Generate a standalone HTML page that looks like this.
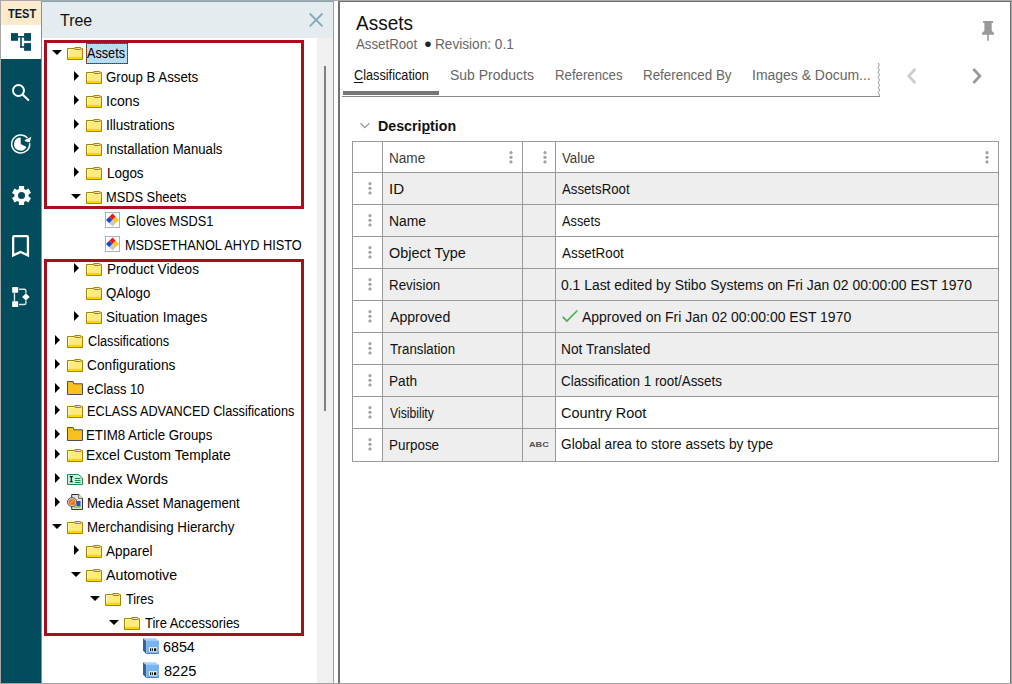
<!DOCTYPE html>
<html><head><meta charset="utf-8"><title>Assets</title>
<style>
html,body{margin:0;padding:0;background:#fff}
#app{position:relative;width:1012px;height:684px;overflow:hidden;background:#fff;font-family:"Liberation Sans", sans-serif}
#app div,#app span,#app svg{position:absolute}
.tx{white-space:nowrap;line-height:normal;transform-origin:0 50%;display:block}
.tx u{text-decoration-thickness:1px;text-underline-offset:2px}
.ic{display:block}
.cell{background:#eee}
.hl{height:1px;background:#999}
.vl{width:1px;background:#999}
.dt{fill:#a2a2a2}
.red{border:3px solid #a5101e;box-sizing:border-box}
</style></head><body>
<div id="app">
<!-- sidebar -->
<div style="left:1px;top:1px;width:40px;height:683px;background:#004c5c"></div>
<div style="left:1px;top:1px;width:40px;height:24px;background:#fde9cb"></div>
<div style="left:1px;top:25px;width:40px;height:34px;background:#fff"></div>
<svg class="ic" style="left:1px;top:25px" width="40" height="35" viewBox="1 25 40 35"><g fill="#004c5c"><rect x="11" y="33.100" width="7" height="7.700"/><rect x="24.100" y="33.100" width="6.900" height="7.700"/><rect x="24.100" y="43.100" width="6.900" height="7.700"/><rect x="17.500" y="36" width="7" height="1.600"/><rect x="20.200" y="36" width="1.600" height="11.800"/><rect x="20.200" y="46.200" width="4.500" height="1.600"/></g></svg>
<svg class="ic" style="left:1px;top:75px" width="40" height="35" viewBox="1 75 40 35"><circle cx="18.500" cy="90.500" r="5.500" fill="none" stroke="#fff" stroke-width="2"/><path d="M23.100 95.100L28.300 100" stroke="#fff" stroke-width="2.100" stroke-linecap="round"/></svg>
<svg class="ic" style="left:1px;top:126px" width="40" height="35" viewBox="1 126 40 35"><path d="M27.400 138A9 9 0 1 0 29.670 143.200" fill="none" stroke="#fff" stroke-width="1.500"/><path d="M31.300 136.700L24.600 140.200L25.200 141.200L29.800 142.400z" fill="#fff"/><path d="M20.700 144V137.400A6.600 6.600 0 1 0 26.500 147.100z" fill="#fff"/></svg>
<svg class="ic" style="left:1px;top:177px" width="40" height="35" viewBox="1 177 40 35"><g fill="#fff" transform="translate(21.500 195.500)"><circle r="7.100"/><rect x="-2.600" y="-9.500" width="5.200" height="19"/><rect x="-2.600" y="-9.500" width="5.200" height="19" transform="rotate(60)"/><rect x="-2.600" y="-9.500" width="5.200" height="19" transform="rotate(120)"/><circle r="3.500" fill="#004c5c"/></g></svg>
<svg class="ic" style="left:1px;top:228px" width="40" height="35" viewBox="1 228 40 35"><path d="M13.150 255.400V237.200Q13.150 236.050 14.300 236.050H26.800Q27.950 236.050 27.950 237.200V255.400L20.550 251.900Z" fill="none" stroke="#fff" stroke-width="2.300" stroke-linejoin="miter" stroke-miterlimit="10"/></svg>
<svg class="ic" style="left:1px;top:279px" width="40" height="35" viewBox="1 279 40 35"><g fill="#fff"><rect x="12.150" y="287.100" width="6" height="5.700" rx=".4"/><rect x="12.150" y="301.300" width="6" height="5.700" rx=".4"/><path d="M25.900 293.200l3.800 3.700l-3.800 3.700l-3.800-3.700z"/></g><g fill="none" stroke="#fff" stroke-opacity=".85" stroke-width="1.400"><path d="M14.450 292.800V301.300"/><path d="M18.900 289.200H24.400Q25.900 289.200 25.900 290.700V293.200"/><path d="M18.900 304.500H24.400Q25.900 304.500 25.900 303V300.600"/></g></svg>

<!-- tree panel -->
<div style="left:41px;top:1px;width:293px;height:37px;background:#e4ecef"></div>
<div style="left:41px;top:1px;width:1px;height:683px;background:#6f97a5"></div>
<svg class="ic" style="left:308px;top:12px" width="16" height="16" viewBox="308 12 16 16"><path d="M309.700 13.500L322.500 26.300M322.500 13.500L309.700 26.300" stroke="#86aab5" stroke-width="1.800" fill="none"/></svg>
<div style="left:317px;top:38px;width:16px;height:646px;background:#f0f0f0"></div>
<div style="left:324px;top:66px;width:2px;height:345px;background:#808080"></div>
<div style="left:86px;top:43px;width:42px;height:21px;background:#b9dcf0"></div><div style="left:86px;top:43px;width:42px;height:1px;background:repeating-linear-gradient(90deg,#15505f 0 1px,#9c5a30 1px 2px)"></div><div style="left:86px;top:63px;width:42px;height:1px;background:repeating-linear-gradient(90deg,#15505f 0 1px,#9c5a30 1px 2px)"></div><div style="left:86px;top:43px;width:1px;height:21px;background:repeating-linear-gradient(180deg,#15505f 0 1px,#9c5a30 1px 2px)"></div><div style="left:127px;top:43px;width:1px;height:21px;background:repeating-linear-gradient(180deg,#15505f 0 1px,#9c5a30 1px 2px)"></div>
<svg class="ic" style="left:52px;top:50px" width="10" height="5" viewBox="0 0 10 5"><path d="M0 0h10l-5 5z" fill="#000"/></svg><svg class="ic" style="left:67px;top:47px" width="16" height="13" viewBox="0 0 16 13"><path d="M7.5 2v-1q0-.5 .5-.5h5.500q.5 0 .5 .5v1.500z" fill="#fffef4" stroke="#a68500"/><path d="M.5 1.500h7l.8 1h5.400l.8-1h1v11h-15z" fill="#ffea80" stroke="#a68500"/><path d="M1 9.900h14v2.100h-14z" fill="#ffd500"/><path d="M1.500 9.500v-7h5.700" fill="none" stroke="#fff6b8"/></svg><svg class="ic" style="left:74px;top:71px" width="5" height="10" viewBox="0 0 5 10"><path d="M0 0v10l5-5z" fill="#000"/></svg><svg class="ic" style="left:86px;top:71px" width="16" height="13" viewBox="0 0 16 13"><path d="M7.5 2v-1q0-.5 .5-.5h5.500q.5 0 .5 .5v1.500z" fill="#fffef4" stroke="#a68500"/><path d="M.5 1.500h7l.8 1h5.400l.8-1h1v11h-15z" fill="#ffea80" stroke="#a68500"/><path d="M1 9.900h14v2.100h-14z" fill="#ffd500"/><path d="M1.500 9.500v-7h5.700" fill="none" stroke="#fff6b8"/></svg><svg class="ic" style="left:74px;top:95px" width="5" height="10" viewBox="0 0 5 10"><path d="M0 0v10l5-5z" fill="#000"/></svg><svg class="ic" style="left:86px;top:95px" width="16" height="13" viewBox="0 0 16 13"><path d="M7.5 2v-1q0-.5 .5-.5h5.500q.5 0 .5 .5v1.500z" fill="#fffef4" stroke="#a68500"/><path d="M.5 1.500h7l.8 1h5.400l.8-1h1v11h-15z" fill="#ffea80" stroke="#a68500"/><path d="M1 9.900h14v2.100h-14z" fill="#ffd500"/><path d="M1.500 9.500v-7h5.700" fill="none" stroke="#fff6b8"/></svg><svg class="ic" style="left:74px;top:119px" width="5" height="10" viewBox="0 0 5 10"><path d="M0 0v10l5-5z" fill="#000"/></svg><svg class="ic" style="left:86px;top:119px" width="16" height="13" viewBox="0 0 16 13"><path d="M7.5 2v-1q0-.5 .5-.5h5.500q.5 0 .5 .5v1.500z" fill="#fffef4" stroke="#a68500"/><path d="M.5 1.500h7l.8 1h5.400l.8-1h1v11h-15z" fill="#ffea80" stroke="#a68500"/><path d="M1 9.900h14v2.100h-14z" fill="#ffd500"/><path d="M1.500 9.500v-7h5.700" fill="none" stroke="#fff6b8"/></svg><svg class="ic" style="left:74px;top:143px" width="5" height="10" viewBox="0 0 5 10"><path d="M0 0v10l5-5z" fill="#000"/></svg><svg class="ic" style="left:86px;top:143px" width="16" height="13" viewBox="0 0 16 13"><path d="M7.5 2v-1q0-.5 .5-.5h5.500q.5 0 .5 .5v1.500z" fill="#fffef4" stroke="#a68500"/><path d="M.5 1.500h7l.8 1h5.400l.8-1h1v11h-15z" fill="#ffea80" stroke="#a68500"/><path d="M1 9.900h14v2.100h-14z" fill="#ffd500"/><path d="M1.500 9.500v-7h5.700" fill="none" stroke="#fff6b8"/></svg><svg class="ic" style="left:74px;top:167px" width="5" height="10" viewBox="0 0 5 10"><path d="M0 0v10l5-5z" fill="#000"/></svg><svg class="ic" style="left:86px;top:167px" width="16" height="13" viewBox="0 0 16 13"><path d="M7.5 2v-1q0-.5 .5-.5h5.500q.5 0 .5 .5v1.500z" fill="#fffef4" stroke="#a68500"/><path d="M.5 1.500h7l.8 1h5.400l.8-1h1v11h-15z" fill="#ffea80" stroke="#a68500"/><path d="M1 9.900h14v2.100h-14z" fill="#ffd500"/><path d="M1.500 9.500v-7h5.700" fill="none" stroke="#fff6b8"/></svg><svg class="ic" style="left:71px;top:194px" width="10" height="5" viewBox="0 0 10 5"><path d="M0 0h10l-5 5z" fill="#000"/></svg><svg class="ic" style="left:86px;top:191px" width="16" height="13" viewBox="0 0 16 13"><path d="M7.5 2v-1q0-.5 .5-.5h5.500q.5 0 .5 .5v1.500z" fill="#fffef4" stroke="#a68500"/><path d="M.5 1.500h7l.8 1h5.400l.8-1h1v11h-15z" fill="#ffea80" stroke="#a68500"/><path d="M1 9.900h14v2.100h-14z" fill="#ffd500"/><path d="M1.500 9.500v-7h5.700" fill="none" stroke="#fff6b8"/></svg><svg class="ic" style="left:105px;top:212px" width="15" height="16" viewBox="0 0 15 16"><rect x=".5" y=".5" width="14" height="15" fill="#fff" stroke="#b0b0b0"/><path d="M7.5 1.5l3.250 3.250l-3.250 3.250l-3.250-3.250z" fill="#f01818"/><path d="M4.250 4.750l3.250 3.250l-3.250 3.250l-3.250-3.250z" fill="#1848c8"/><path d="M10.750 4.750l3.250 3.250l-3.250 3.250l-3.250-3.250z" fill="#ffc818"/><path d="M7.5 8l3.250 3.250l-3.250 3.250l-3.250-3.250z" fill="#c8c8c8"/></svg><svg class="ic" style="left:105px;top:236px" width="15" height="16" viewBox="0 0 15 16"><rect x=".5" y=".5" width="14" height="15" fill="#fff" stroke="#b0b0b0"/><path d="M7.5 1.5l3.250 3.250l-3.250 3.250l-3.250-3.250z" fill="#f01818"/><path d="M4.250 4.750l3.250 3.250l-3.250 3.250l-3.250-3.250z" fill="#1848c8"/><path d="M10.750 4.750l3.250 3.250l-3.250 3.250l-3.250-3.250z" fill="#ffc818"/><path d="M7.5 8l3.250 3.250l-3.250 3.250l-3.250-3.250z" fill="#c8c8c8"/></svg><svg class="ic" style="left:74px;top:263px" width="5" height="10" viewBox="0 0 5 10"><path d="M0 0v10l5-5z" fill="#000"/></svg><svg class="ic" style="left:86px;top:263px" width="16" height="13" viewBox="0 0 16 13"><path d="M7.5 2v-1q0-.5 .5-.5h5.500q.5 0 .5 .5v1.500z" fill="#fffef4" stroke="#a68500"/><path d="M.5 1.500h7l.8 1h5.400l.8-1h1v11h-15z" fill="#ffea80" stroke="#a68500"/><path d="M1 9.900h14v2.100h-14z" fill="#ffd500"/><path d="M1.500 9.500v-7h5.700" fill="none" stroke="#fff6b8"/></svg><svg class="ic" style="left:86px;top:287px" width="16" height="13" viewBox="0 0 16 13"><path d="M7.5 2v-1q0-.5 .5-.5h5.500q.5 0 .5 .5v1.500z" fill="#fffef4" stroke="#a68500"/><path d="M.5 1.500h7l.8 1h5.400l.8-1h1v11h-15z" fill="#ffea80" stroke="#a68500"/><path d="M1 9.900h14v2.100h-14z" fill="#ffd500"/><path d="M1.500 9.500v-7h5.700" fill="none" stroke="#fff6b8"/></svg><svg class="ic" style="left:74px;top:311px" width="5" height="10" viewBox="0 0 5 10"><path d="M0 0v10l5-5z" fill="#000"/></svg><svg class="ic" style="left:86px;top:311px" width="16" height="13" viewBox="0 0 16 13"><path d="M7.5 2v-1q0-.5 .5-.5h5.500q.5 0 .5 .5v1.500z" fill="#fffef4" stroke="#a68500"/><path d="M.5 1.500h7l.8 1h5.400l.8-1h1v11h-15z" fill="#ffea80" stroke="#a68500"/><path d="M1 9.900h14v2.100h-14z" fill="#ffd500"/><path d="M1.500 9.500v-7h5.700" fill="none" stroke="#fff6b8"/></svg><svg class="ic" style="left:55px;top:335px" width="5" height="10" viewBox="0 0 5 10"><path d="M0 0v10l5-5z" fill="#000"/></svg><svg class="ic" style="left:67px;top:335px" width="16" height="13" viewBox="0 0 16 13"><path d="M7.5 2v-1q0-.5 .5-.5h5.500q.5 0 .5 .5v1.500z" fill="#fffef4" stroke="#a68500"/><path d="M.5 1.500h7l.8 1h5.400l.8-1h1v11h-15z" fill="#ffea80" stroke="#a68500"/><path d="M1 9.900h14v2.100h-14z" fill="#ffd500"/><path d="M1.500 9.500v-7h5.700" fill="none" stroke="#fff6b8"/></svg><svg class="ic" style="left:55px;top:359px" width="5" height="10" viewBox="0 0 5 10"><path d="M0 0v10l5-5z" fill="#000"/></svg><svg class="ic" style="left:67px;top:359px" width="16" height="13" viewBox="0 0 16 13"><path d="M7.5 2v-1q0-.5 .5-.5h5.500q.5 0 .5 .5v1.500z" fill="#fffef4" stroke="#a68500"/><path d="M.5 1.500h7l.8 1h5.400l.8-1h1v11h-15z" fill="#ffea80" stroke="#a68500"/><path d="M1 9.900h14v2.100h-14z" fill="#ffd500"/><path d="M1.500 9.500v-7h5.700" fill="none" stroke="#fff6b8"/></svg><svg class="ic" style="left:55px;top:383px" width="5" height="10" viewBox="0 0 5 10"><path d="M0 0v10l5-5z" fill="#000"/></svg><svg class="ic" style="left:67px;top:381px" width="16" height="14" viewBox="0 0 16 14"><path d="M.5 .5h5.600l.7 2.300h8.700v10.700h-15z" fill="#fbc01e" stroke="#44505a"/></svg><svg class="ic" style="left:55px;top:405px" width="5" height="10" viewBox="0 0 5 10"><path d="M0 0v10l5-5z" fill="#000"/></svg><svg class="ic" style="left:67px;top:405px" width="16" height="13" viewBox="0 0 16 13"><path d="M7.5 2v-1q0-.5 .5-.5h5.500q.5 0 .5 .5v1.500z" fill="#fffef4" stroke="#a68500"/><path d="M.5 1.500h7l.8 1h5.400l.8-1h1v11h-15z" fill="#ffea80" stroke="#a68500"/><path d="M1 9.900h14v2.100h-14z" fill="#ffd500"/><path d="M1.500 9.500v-7h5.700" fill="none" stroke="#fff6b8"/></svg><svg class="ic" style="left:55px;top:429px" width="5" height="10" viewBox="0 0 5 10"><path d="M0 0v10l5-5z" fill="#000"/></svg><svg class="ic" style="left:67px;top:427px" width="16" height="14" viewBox="0 0 16 14"><path d="M.5 .5h5.600l.7 2.300h8.700v10.700h-15z" fill="#fbc01e" stroke="#44505a"/></svg><svg class="ic" style="left:55px;top:449px" width="5" height="10" viewBox="0 0 5 10"><path d="M0 0v10l5-5z" fill="#000"/></svg><svg class="ic" style="left:67px;top:449px" width="16" height="13" viewBox="0 0 16 13"><path d="M7.5 2v-1q0-.5 .5-.5h5.500q.5 0 .5 .5v1.500z" fill="#fffef4" stroke="#a68500"/><path d="M.5 1.500h7l.8 1h5.400l.8-1h1v11h-15z" fill="#ffea80" stroke="#a68500"/><path d="M1 9.900h14v2.100h-14z" fill="#ffd500"/><path d="M1.500 9.500v-7h5.700" fill="none" stroke="#fff6b8"/></svg><svg class="ic" style="left:55px;top:473px" width="5" height="10" viewBox="0 0 5 10"><path d="M0 0v10l5-5z" fill="#000"/></svg><svg class="ic" style="left:67px;top:474px" width="16" height="11" viewBox="0 0 16 11"><path d="M.5 .5h11l4 3.500v6.500h-15z" fill="#d0ecd8" stroke="#1a8a50"/><path d="M2.800 2.600h3M2.800 7.800h3M4.300 2.600v5.200" stroke="#111" stroke-width="1.100"/><path d="M8 4.500h5.500M8 6.500h5.500M8 8.500h5.500" stroke="#1a8a50"/></svg><svg class="ic" style="left:55px;top:497px" width="5" height="10" viewBox="0 0 5 10"><path d="M0 0v10l5-5z" fill="#000"/></svg><svg class="ic" style="left:67px;top:494px" width="16" height="16" viewBox="0 0 16 16"><path d="M4.700 .5h7l3.800 3.800v11.200h-10.800z" fill="#e2e2e2" stroke="#333"/><path d="M11.700 .5v3.800h3.800" fill="#fff" stroke="#333" stroke-width=".8"/><rect x="9.500" y="7" width="4" height="5.500" fill="#1e50d8"/><rect x="7" y="12.400" width="6.500" height="1.500" fill="#80d820"/><circle cx="5.100" cy="8.100" r="4.600" fill="#d0d0d0" stroke="#555"/><circle cx="5.100" cy="8.100" r="3.200" fill="#f07018"/><path d="M3.500 9.600q1-3 3.200-3" stroke="#f8b070" fill="none"/></svg><svg class="ic" style="left:52px;top:524px" width="10" height="5" viewBox="0 0 10 5"><path d="M0 0h10l-5 5z" fill="#000"/></svg><svg class="ic" style="left:67px;top:521px" width="16" height="13" viewBox="0 0 16 13"><path d="M7.5 2v-1q0-.5 .5-.5h5.500q.5 0 .5 .5v1.500z" fill="#fffef4" stroke="#a68500"/><path d="M.5 1.500h7l.8 1h5.400l.8-1h1v11h-15z" fill="#ffea80" stroke="#a68500"/><path d="M1 9.900h14v2.100h-14z" fill="#ffd500"/><path d="M1.500 9.500v-7h5.700" fill="none" stroke="#fff6b8"/></svg><svg class="ic" style="left:74px;top:545px" width="5" height="10" viewBox="0 0 5 10"><path d="M0 0v10l5-5z" fill="#000"/></svg><svg class="ic" style="left:86px;top:545px" width="16" height="13" viewBox="0 0 16 13"><path d="M7.5 2v-1q0-.5 .5-.5h5.500q.5 0 .5 .5v1.500z" fill="#fffef4" stroke="#a68500"/><path d="M.5 1.500h7l.8 1h5.400l.8-1h1v11h-15z" fill="#ffea80" stroke="#a68500"/><path d="M1 9.900h14v2.100h-14z" fill="#ffd500"/><path d="M1.500 9.500v-7h5.700" fill="none" stroke="#fff6b8"/></svg><svg class="ic" style="left:71px;top:572px" width="10" height="5" viewBox="0 0 10 5"><path d="M0 0h10l-5 5z" fill="#000"/></svg><svg class="ic" style="left:86px;top:569px" width="16" height="13" viewBox="0 0 16 13"><path d="M7.5 2v-1q0-.5 .5-.5h5.500q.5 0 .5 .5v1.500z" fill="#fffef4" stroke="#a68500"/><path d="M.5 1.500h7l.8 1h5.400l.8-1h1v11h-15z" fill="#ffea80" stroke="#a68500"/><path d="M1 9.900h14v2.100h-14z" fill="#ffd500"/><path d="M1.500 9.500v-7h5.700" fill="none" stroke="#fff6b8"/></svg><svg class="ic" style="left:90px;top:596px" width="10" height="5" viewBox="0 0 10 5"><path d="M0 0h10l-5 5z" fill="#000"/></svg><svg class="ic" style="left:105px;top:593px" width="16" height="13" viewBox="0 0 16 13"><path d="M7.5 2v-1q0-.5 .5-.5h5.500q.5 0 .5 .5v1.500z" fill="#fffef4" stroke="#a68500"/><path d="M.5 1.500h7l.8 1h5.400l.8-1h1v11h-15z" fill="#ffea80" stroke="#a68500"/><path d="M1 9.900h14v2.100h-14z" fill="#ffd500"/><path d="M1.500 9.500v-7h5.700" fill="none" stroke="#fff6b8"/></svg><svg class="ic" style="left:109px;top:620px" width="10" height="5" viewBox="0 0 10 5"><path d="M0 0h10l-5 5z" fill="#000"/></svg><svg class="ic" style="left:124px;top:617px" width="16" height="13" viewBox="0 0 16 13"><path d="M7.5 2v-1q0-.5 .5-.5h5.500q.5 0 .5 .5v1.500z" fill="#fffef4" stroke="#a68500"/><path d="M.5 1.500h7l.8 1h5.400l.8-1h1v11h-15z" fill="#ffea80" stroke="#a68500"/><path d="M1 9.900h14v2.100h-14z" fill="#ffd500"/><path d="M1.500 9.500v-7h5.700" fill="none" stroke="#fff6b8"/></svg><svg class="ic" style="left:143px;top:638px" width="16" height="16" viewBox="0 0 16 16"><path d="M0 .3H12.600L16 2.900H3.200z" fill="#a8d0f8"/><path d="M0 .3L3.200 2.900V15.900L0 12.600z" fill="#3a6290"/><rect x="3.200" y="2.900" width="12.800" height="12" fill="#78b4f4"/><rect x="3.200" y="14.900" width="12.800" height="1" fill="#4a78a8"/><rect x="6" y="9.300" width="8" height="4.200" fill="#fff"/><path d="M7 10.200h1.100v2.700h-1.100zM8.800 10.200h1.100v2.700h-1.100zM10.900 10.200h2.400v2.700h-2.400z" fill="#111"/></svg><svg class="ic" style="left:143px;top:662px" width="16" height="16" viewBox="0 0 16 16"><path d="M0 .3H12.600L16 2.900H3.200z" fill="#a8d0f8"/><path d="M0 .3L3.200 2.900V15.900L0 12.600z" fill="#3a6290"/><rect x="3.200" y="2.900" width="12.800" height="12" fill="#78b4f4"/><rect x="3.200" y="14.900" width="12.800" height="1" fill="#4a78a8"/><rect x="6" y="9.300" width="8" height="4.200" fill="#fff"/><path d="M7 10.200h1.100v2.700h-1.100zM8.800 10.200h1.100v2.700h-1.100zM10.900 10.200h2.400v2.700h-2.400z" fill="#111"/></svg>
<div class="red" style="left:44px;top:40px;width:260px;height:169px"></div>
<div class="red" style="left:44px;top:259px;width:260px;height:377px"></div>
<!-- splitter -->
<div style="left:333px;top:1px;width:1px;height:683px;background:#7fa8b8"></div>
<div style="left:338px;top:1px;width:2px;height:683px;background:#707070"></div>
<!-- right panel -->
<div class="hl" style="left:342px;top:95.700px;width:538px;height:1.200px;background:#888"></div>
<div style="left:343px;top:91px;width:96px;height:3.700px;background:#777"></div>
<div class="hl" style="left:352px;top:141px;width:647px"></div>
<div class="hl" style="left:352px;top:172px;width:647px"></div>
<div class="cell" style="left:383px;top:173px;width:139px;height:31px"></div><div class="cell" style="left:523px;top:173px;width:32px;height:31px"></div><div class="cell" style="left:556px;top:173px;width:442px;height:31px;background:#eee"></div><div class="hl" style="left:352px;top:204px;width:647px"></div><svg class="ic dt" style="left:367.7px;top:181.8px" width="4" height="13" viewBox="0 0 4 13"><circle cx="2" cy="1.700" r="1.600"/><circle cx="2" cy="6.300" r="1.600"/><circle cx="2" cy="10.900" r="1.600"/></svg><div class="cell" style="left:383px;top:205px;width:139px;height:31px"></div><div class="cell" style="left:523px;top:205px;width:32px;height:31px"></div><div class="cell" style="left:556px;top:205px;width:442px;height:31px;background:#fff"></div><div class="hl" style="left:352px;top:236px;width:647px"></div><svg class="ic dt" style="left:367.7px;top:213.8px" width="4" height="13" viewBox="0 0 4 13"><circle cx="2" cy="1.700" r="1.600"/><circle cx="2" cy="6.300" r="1.600"/><circle cx="2" cy="10.900" r="1.600"/></svg><div class="cell" style="left:383px;top:237px;width:139px;height:31px"></div><div class="cell" style="left:523px;top:237px;width:32px;height:31px"></div><div class="cell" style="left:556px;top:237px;width:442px;height:31px;background:#fff"></div><div class="hl" style="left:352px;top:268px;width:647px"></div><svg class="ic dt" style="left:367.7px;top:245.8px" width="4" height="13" viewBox="0 0 4 13"><circle cx="2" cy="1.700" r="1.600"/><circle cx="2" cy="6.300" r="1.600"/><circle cx="2" cy="10.900" r="1.600"/></svg><div class="cell" style="left:383px;top:269px;width:139px;height:31px"></div><div class="cell" style="left:523px;top:269px;width:32px;height:31px"></div><div class="cell" style="left:556px;top:269px;width:442px;height:31px;background:#eee"></div><div class="hl" style="left:352px;top:300px;width:647px"></div><svg class="ic dt" style="left:367.7px;top:277.8px" width="4" height="13" viewBox="0 0 4 13"><circle cx="2" cy="1.700" r="1.600"/><circle cx="2" cy="6.300" r="1.600"/><circle cx="2" cy="10.900" r="1.600"/></svg><div class="cell" style="left:383px;top:301px;width:139px;height:31px"></div><div class="cell" style="left:523px;top:301px;width:32px;height:31px"></div><div class="cell" style="left:556px;top:301px;width:442px;height:31px;background:#eee"></div><div class="hl" style="left:352px;top:332px;width:647px"></div><svg class="ic dt" style="left:367.7px;top:309.8px" width="4" height="13" viewBox="0 0 4 13"><circle cx="2" cy="1.700" r="1.600"/><circle cx="2" cy="6.300" r="1.600"/><circle cx="2" cy="10.900" r="1.600"/></svg><div class="cell" style="left:383px;top:333px;width:139px;height:31px"></div><div class="cell" style="left:523px;top:333px;width:32px;height:31px"></div><div class="cell" style="left:556px;top:333px;width:442px;height:31px;background:#eee"></div><div class="hl" style="left:352px;top:364px;width:647px"></div><svg class="ic dt" style="left:367.7px;top:341.8px" width="4" height="13" viewBox="0 0 4 13"><circle cx="2" cy="1.700" r="1.600"/><circle cx="2" cy="6.300" r="1.600"/><circle cx="2" cy="10.900" r="1.600"/></svg><div class="cell" style="left:383px;top:365px;width:139px;height:31px"></div><div class="cell" style="left:523px;top:365px;width:32px;height:31px"></div><div class="cell" style="left:556px;top:365px;width:442px;height:31px;background:#eee"></div><div class="hl" style="left:352px;top:396px;width:647px"></div><svg class="ic dt" style="left:367.7px;top:373.8px" width="4" height="13" viewBox="0 0 4 13"><circle cx="2" cy="1.700" r="1.600"/><circle cx="2" cy="6.300" r="1.600"/><circle cx="2" cy="10.900" r="1.600"/></svg><div class="cell" style="left:383px;top:397px;width:139px;height:31px"></div><div class="cell" style="left:523px;top:397px;width:32px;height:31px"></div><div class="cell" style="left:556px;top:397px;width:442px;height:31px;background:#fff"></div><div class="hl" style="left:352px;top:428px;width:647px"></div><svg class="ic dt" style="left:367.7px;top:405.8px" width="4" height="13" viewBox="0 0 4 13"><circle cx="2" cy="1.700" r="1.600"/><circle cx="2" cy="6.300" r="1.600"/><circle cx="2" cy="10.900" r="1.600"/></svg><div class="cell" style="left:383px;top:429px;width:139px;height:32px"></div><div class="cell" style="left:523px;top:429px;width:32px;height:32px"></div><div class="cell" style="left:556px;top:429px;width:442px;height:32px;background:#fff"></div><div class="hl" style="left:352px;top:461px;width:647px"></div><svg class="ic dt" style="left:367.7px;top:437.8px" width="4" height="13" viewBox="0 0 4 13"><circle cx="2" cy="1.700" r="1.600"/><circle cx="2" cy="6.300" r="1.600"/><circle cx="2" cy="10.900" r="1.600"/></svg>
<div class="vl" style="left:352px;top:141px;height:321px"></div>
<div class="vl" style="left:382px;top:141px;height:321px"></div>
<div class="vl" style="left:522px;top:141px;height:321px"></div>
<div class="vl" style="left:555px;top:141px;height:321px"></div>
<div class="vl" style="left:998px;top:141px;height:321px"></div>
<svg class="ic dt" style="left:509px;top:150.6px" width="4" height="13" viewBox="0 0 4 13"><circle cx="2" cy="1.700" r="1.600"/><circle cx="2" cy="6.300" r="1.600"/><circle cx="2" cy="10.900" r="1.600"/></svg><svg class="ic dt" style="left:543.3px;top:150.6px" width="4" height="13" viewBox="0 0 4 13"><circle cx="2" cy="1.700" r="1.600"/><circle cx="2" cy="6.300" r="1.600"/><circle cx="2" cy="10.900" r="1.600"/></svg><svg class="ic dt" style="left:984.8px;top:150.6px" width="4" height="13" viewBox="0 0 4 13"><circle cx="2" cy="1.700" r="1.600"/><circle cx="2" cy="6.300" r="1.600"/><circle cx="2" cy="10.900" r="1.600"/></svg>
<svg class="ic" style="left:980px;top:18px" width="16" height="26" viewBox="980 18 16 26"><path d="M983.100 21H993V22.900H991.700V30.700L994 33V34.850H988.800V40.700H987.200V34.850H982V33L984.400 30.700V22.900H983.100Z" fill="#999"/></svg>
<svg class="ic" style="left:904px;top:64px" width="16" height="24" viewBox="904 64 16 24"><path d="M915.300 69L908.800 76L915.300 83" fill="none" stroke="#cdcdcd" stroke-width="2.700"/></svg>
<svg class="ic" style="left:969px;top:64px" width="16" height="24" viewBox="969 64 16 24"><path d="M973.400 69L979.900 76L973.400 83" fill="none" stroke="#999" stroke-width="2.700"/></svg>
<svg class="ic" style="left:874px;top:62px" width="10" height="36" viewBox="874 62 10 36"><path d="M878.300 63L879.300 65L878 67.500L879.400 70L878.100 72.500L879.500 75L878.200 77.500L879.500 80L878.200 82.500L879.500 85L878.300 87.500L879.600 90L878.400 92.500L879.500 95L879 96.300" fill="none" stroke="#808080" stroke-width=".8"/></svg>
<svg class="ic" style="left:358px;top:120px" width="14" height="12" viewBox="358 120 14 12"><path d="M360.500 123.200L364.900 127.600L369.300 123.200" fill="none" stroke="#999" stroke-width="1.300"/></svg>
<svg class="ic" style="left:560px;top:306px" width="20" height="18" viewBox="560 306 20 18"><path d="M562.700 316.800L566.900 321L577.400 310.500" fill="none" stroke="#4caf50" stroke-width="1.700"/></svg>

<span class="tx" style="left:87.05px;top:45.33px;font-size:14px;color:#000;transform:scaleX(0.9041)">Assets</span><span class="tx" style="left:106.43px;top:69.33px;font-size:14px;color:#000;transform:scaleX(0.9471)">Group B Assets</span><span class="tx" style="left:106.12px;top:93.33px;font-size:14px;color:#000;transform:scaleX(1.0028)">Icons</span><span class="tx" style="left:106.17px;top:117.33px;font-size:14px;color:#000;transform:scaleX(0.9683)">Illustrations</span><span class="tx" style="left:106.20px;top:141.33px;font-size:14px;color:#000;transform:scaleX(0.9409)">Installation Manuals</span><span class="tx" style="left:106.82px;top:165.33px;font-size:14px;color:#000;transform:scaleX(0.9587)">Logos</span><span class="tx" style="left:106.04px;top:189.33px;font-size:14px;color:#000;transform:scaleX(0.9156)">MSDS Sheets</span><span class="tx" style="left:125.56px;top:213.33px;font-size:14px;color:#000;transform:scaleX(0.9133)">Gloves MSDS1</span><span class="tx" style="left:125.05px;top:237.33px;font-size:14px;color:#000;transform:scaleX(0.9088)">MSDSETHANOL AHYD HISTO</span><span class="tx" style="left:106.81px;top:261.33px;font-size:14px;color:#000;transform:scaleX(0.9709)">Product Videos</span><span class="tx" style="left:105.73px;top:285.33px;font-size:14px;color:#000;transform:scaleX(0.9493)">QAlogo</span><span class="tx" style="left:105.75px;top:309.33px;font-size:14px;color:#000;transform:scaleX(0.9707)">Situation Images</span><span class="tx" style="left:87.53px;top:333.33px;font-size:14px;color:#000;transform:scaleX(0.9065)">Classifications</span><span class="tx" style="left:87.31px;top:357.33px;font-size:14px;color:#000;transform:scaleX(0.9792)">Configurations</span><span class="tx" style="left:86.94px;top:381.33px;font-size:14px;color:#000;transform:scaleX(0.9200)">eClass 10</span><span class="tx" style="left:86.55px;top:403.33px;font-size:14px;color:#000;transform:scaleX(0.9075)">ECLASS ADVANCED Classifications</span><span class="tx" style="left:86.44px;top:427.33px;font-size:14px;color:#000;transform:scaleX(0.9496)">ETIM8 Article Groups</span><span class="tx" style="left:86.40px;top:447.33px;font-size:14px;color:#000;transform:scaleX(0.9849)">Excel Custom Template</span><span class="tx" style="left:86.54px;top:471.33px;font-size:14px;color:#000;transform:scaleX(1.0341)">Index Words</span><span class="tx" style="left:87.01px;top:495.33px;font-size:14px;color:#000;transform:scaleX(0.9437)">Media Asset Management</span><span class="tx" style="left:86.93px;top:519.33px;font-size:14px;color:#000;transform:scaleX(0.9515)">Merchandising Hierarchy</span><span class="tx" style="left:106.06px;top:543.33px;font-size:14px;color:#000;transform:scaleX(0.9615)">Apparel</span><span class="tx" style="left:106.06px;top:567.33px;font-size:14px;color:#000;transform:scaleX(1.0150)">Automotive</span><span class="tx" style="left:125.99px;top:591.33px;font-size:14px;color:#000;transform:scaleX(0.8998)">Tires</span><span class="tx" style="left:144.99px;top:615.33px;font-size:14px;color:#000;transform:scaleX(0.9255)">Tire Accessories</span><span class="tx" style="left:163.22px;top:639.33px;font-size:14px;color:#000;transform:scaleX(1.0216)">6854</span><span class="tx" style="left:163.52px;top:663.33px;font-size:14px;color:#000;transform:scaleX(1.0433)">8225</span><span class="tx" style="left:7.54px;top:6.74px;font-size:12px;color:#0c1c2c;transform:scaleX(0.9163);font-weight:700">TEST</span><span class="tx" style="left:60.49px;top:11.60px;font-size:15.8px;color:#111;transform:scaleX(1.0115)">Tree</span><span class="tx" style="left:356.04px;top:12.15px;font-size:19.5px;color:#111;transform:scaleX(0.9741)">Assets</span><span class="tx" style="left:356.04px;top:36.33px;font-size:14px;color:#666;transform:scaleX(0.9471)">AssetRoot</span><span class="tx" style="left:424.20px;top:32.00px;font-size:21px;color:#222;transform:scaleX(1.0000)">•</span><span class="tx" style="left:435.36px;top:36.33px;font-size:14px;color:#666;transform:scaleX(0.9735)">Revision: 0.1</span><span class="tx" style="left:354.00px;top:67.33px;font-size:14px;color:#111;transform:scaleX(0.9078)"><u>C</u>lassification</span><span class="tx" style="left:449.75px;top:67.33px;font-size:14px;color:#666;transform:scaleX(0.9987)">Sub Products</span><span class="tx" style="left:555.40px;top:67.33px;font-size:14px;color:#666;transform:scaleX(0.9430)">References</span><span class="tx" style="left:643.34px;top:67.33px;font-size:14px;color:#666;transform:scaleX(0.9556)">Referenced By</span><span class="tx" style="left:751.65px;top:67.33px;font-size:14px;color:#666;transform:scaleX(0.9971)">Images &amp; Docum...</span><span class="tx" style="left:378.26px;top:118.33px;font-size:14px;color:#111;transform:scaleX(1.0143);font-weight:700">Descri<u>p</u>tion</span><span class="tx" style="left:389.33px;top:150.33px;font-size:14px;color:#3c3c3c;transform:scaleX(0.9705)">Name</span><span class="tx" style="left:562.03px;top:150.33px;font-size:14px;color:#3c3c3c;transform:scaleX(0.9481)">Value</span><span class="tx" style="left:529.07px;top:440.36px;font-size:8px;color:#505050;transform:scaleX(1.1370);font-weight:700">ABC</span><span class="tx" style="left:388.50px;top:181.13px;font-size:14px;color:#111;transform:scaleX(1.0805)">ID</span><span class="tx" style="left:562.04px;top:181.13px;font-size:14px;color:#111;transform:scaleX(0.9438)">AssetsRoot</span><span class="tx" style="left:388.80px;top:213.13px;font-size:14px;color:#111;transform:scaleX(0.9920)">Name</span><span class="tx" style="left:562.04px;top:213.13px;font-size:14px;color:#111;transform:scaleX(0.9124)">Assets</span><span class="tx" style="left:388.92px;top:245.13px;font-size:14px;color:#111;transform:scaleX(1.0307)">Object Type</span><span class="tx" style="left:562.04px;top:245.13px;font-size:14px;color:#111;transform:scaleX(0.9571)">AssetRoot</span><span class="tx" style="left:388.85px;top:277.13px;font-size:14px;color:#111;transform:scaleX(0.9544)">Revision</span><span class="tx" style="left:561.04px;top:277.13px;font-size:14px;color:#111;transform:scaleX(0.9933)">0.1 Last edited by Stibo Systems on Fri Jan 02 00:00:00 EST 1970</span><span class="tx" style="left:389.53px;top:309.13px;font-size:14px;color:#111;transform:scaleX(1.0057)">Approved</span><span class="tx" style="left:582.04px;top:309.13px;font-size:14px;color:#111;transform:scaleX(0.9976)">Approved on Fri Jan 02 00:00:00 EST 1970</span><span class="tx" style="left:389.52px;top:341.13px;font-size:14px;color:#111;transform:scaleX(0.9475)">Translation</span><span class="tx" style="left:561.32px;top:341.13px;font-size:14px;color:#111;transform:scaleX(0.9811)">Not Translated</span><span class="tx" style="left:388.83px;top:373.13px;font-size:14px;color:#111;transform:scaleX(0.9740)">Path</span><span class="tx" style="left:561.40px;top:373.13px;font-size:14px;color:#111;transform:scaleX(0.9577)">Classification 1 root/Assets</span><span class="tx" style="left:389.53px;top:405.13px;font-size:14px;color:#111;transform:scaleX(0.8717)">Visibility</span><span class="tx" style="left:561.18px;top:405.13px;font-size:14px;color:#111;transform:scaleX(1.0342)">Country Root</span><span class="tx" style="left:388.84px;top:437.13px;font-size:14px;color:#111;transform:scaleX(0.9609)">Purpose</span><span class="tx" style="left:561.40px;top:436.13px;font-size:14px;color:#111;transform:scaleX(0.9808)">Global area to store assets by type</span>
<!-- outer frame -->
<div style="left:41px;top:1px;width:293px;height:1px;background:#7fa8b5"></div>
<div style="left:338px;top:1px;width:673px;height:1px;background:#707070"></div>
<div style="left:1010px;top:1px;width:1px;height:682px;background:#707070"></div>
<div style="left:0;top:0;width:1012px;height:1px;background:#a8a8a8"></div>
<div style="left:0;top:0;width:1px;height:684px;background:#a8a8a8"></div>
<div style="left:1011px;top:0;width:1px;height:684px;background:#a8a8a8"></div>
<div style="left:0;top:683px;width:1012px;height:1px;background:#a2a2a2"></div>
</div>
</body></html>
